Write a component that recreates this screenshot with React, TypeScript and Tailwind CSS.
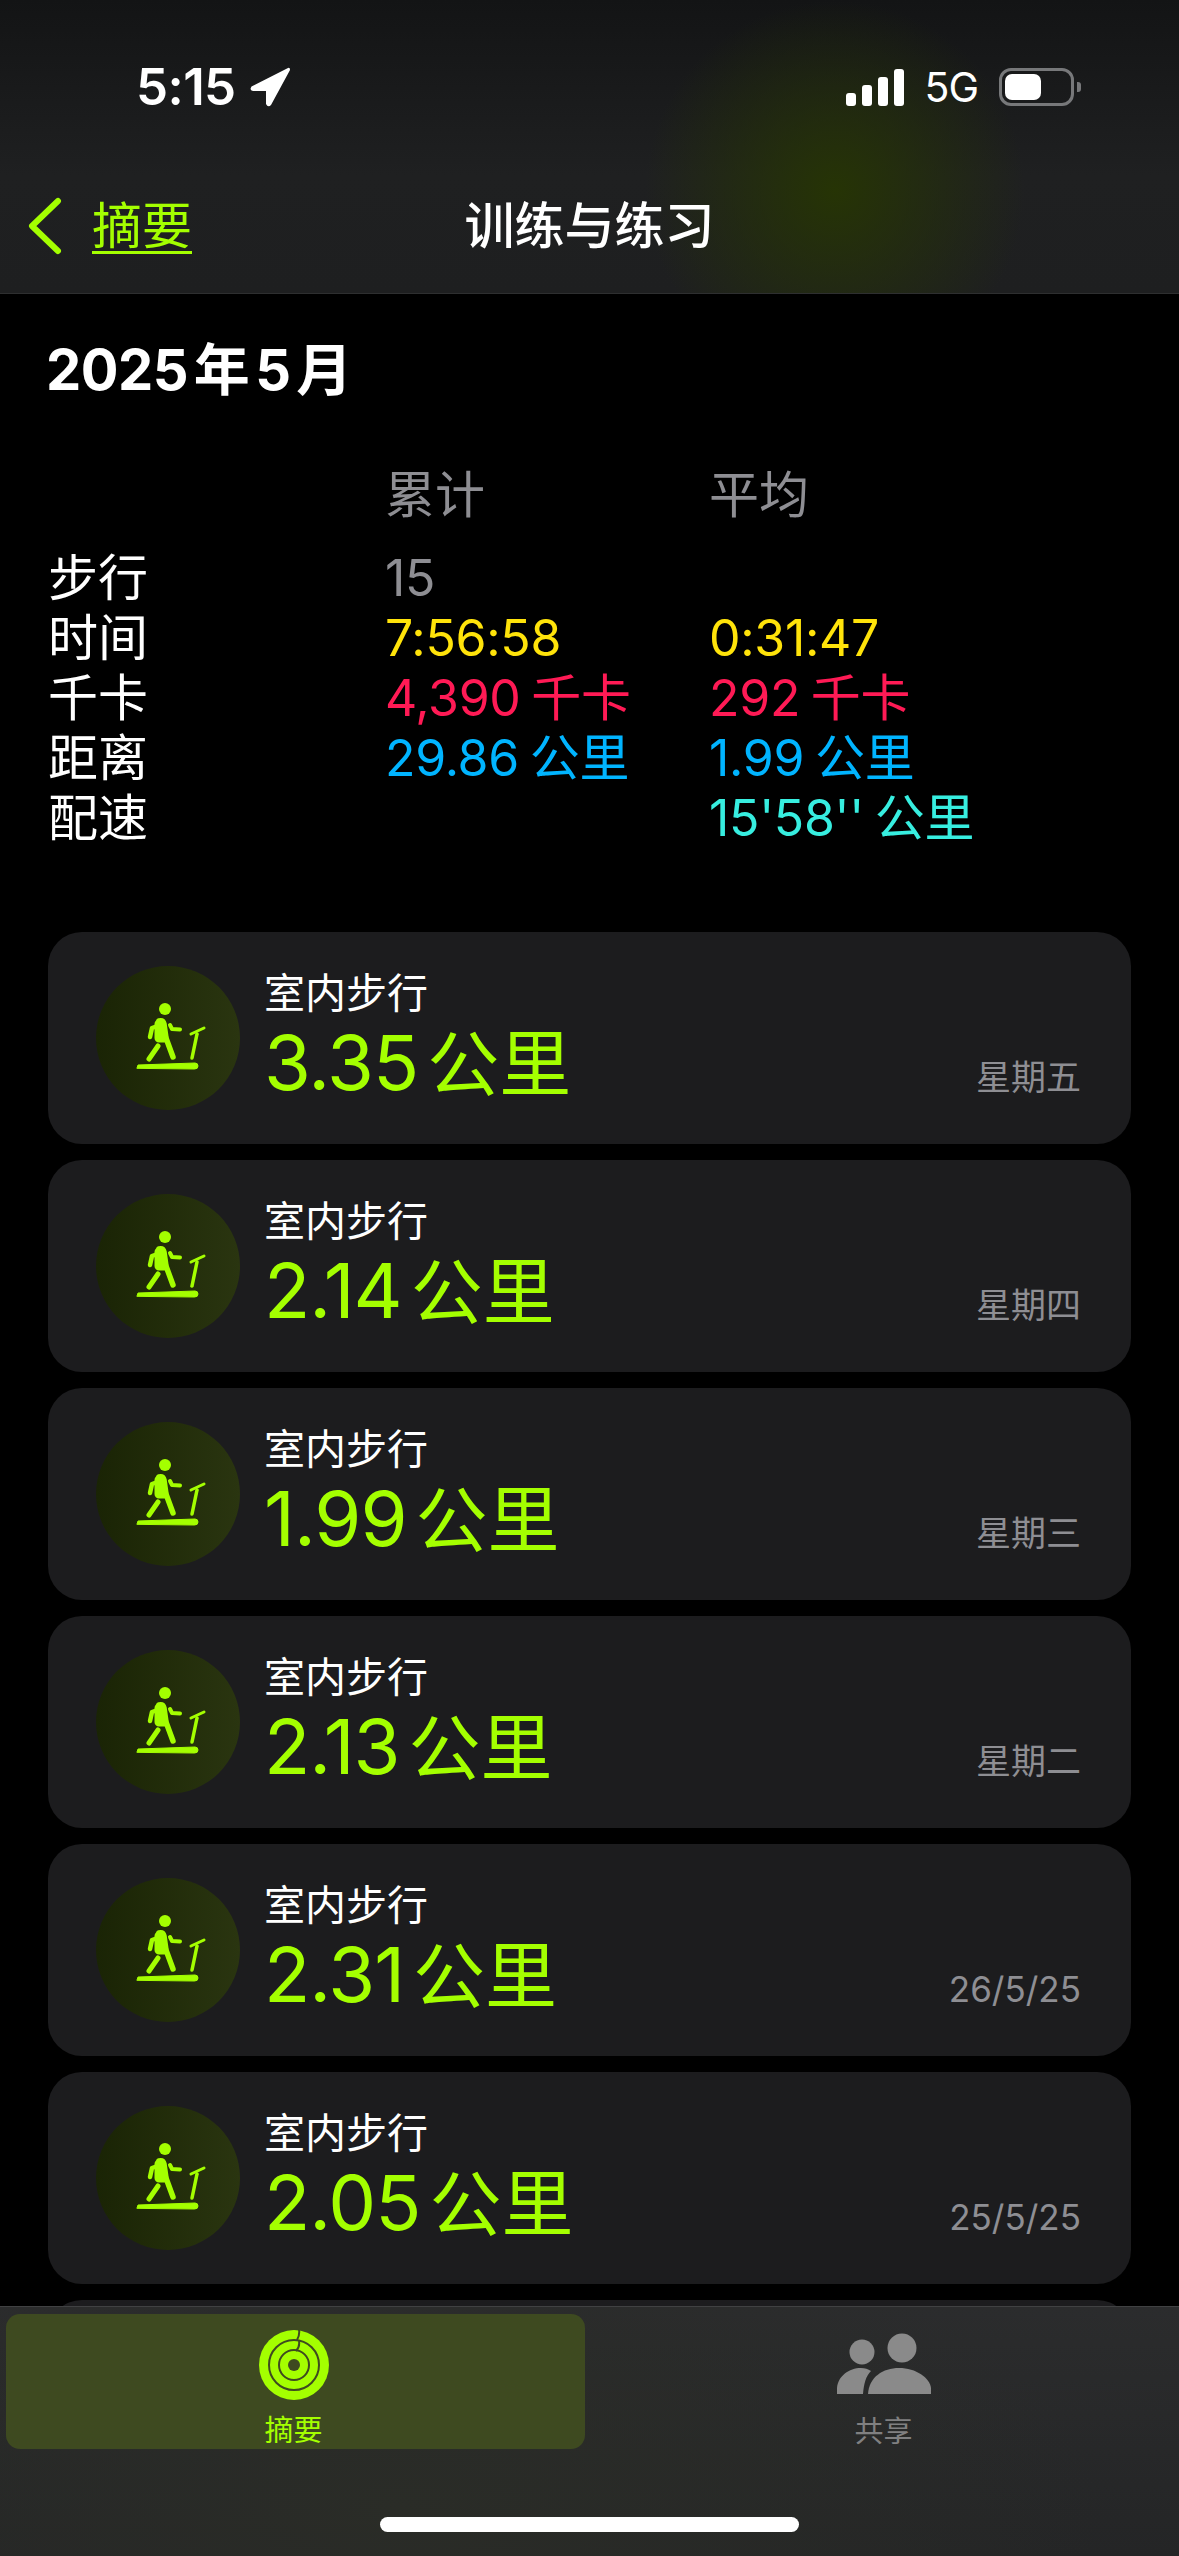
const stack = "font-['Inter','Noto_Sans_CJK_SC',sans-serif]";

type Workout = { km: string; day: string };

const workouts: Workout[] = [
  { km: "3.35", day: "星期五" },
  { km: "2.14", day: "星期四" },
  { km: "1.99", day: "星期三" },
  { km: "2.13", day: "星期二" },
  { km: "2.31", day: "26/5/25" },
  { km: "2.05", day: "25/5/25" },
];

const rows = [
  { label: "步行", total: "15", avg: "", totalColor: "text-[#8e8e93]", avgColor: "" },
  { label: "时间", total: "7:56:58", avg: "0:31:47", totalColor: "text-[#ffe30a]", avgColor: "text-[#ffe30a]" },
  { label: "千卡", total: "4,390 千卡", avg: "292 千卡", totalColor: "text-[#ff1a55]", avgColor: "text-[#ff1a55]" },
  { label: "距离", total: "29.86 公里", avg: "1.99 公里", totalColor: "text-[#00b4ff]", avgColor: "text-[#00b4ff]" },
  { label: "配速", total: "", avg: "15'58'' 公里", totalColor: "", avgColor: "text-[#37eee0]" },
];

const StatusBar = () => (
  <div className="flex h-[110px] items-center justify-between pl-[136px] pr-[98px] pt-[64px]">
    <div className="flex items-center gap-[14px]">
      <span className="text-[51px] leading-[60px] font-semibold tracking-[-0.6px] text-white">5:15</span>
      <svg width="40" height="42" viewBox="0 0 40 40" fill="#fff">
        <path d="M38 1 L1.5 19.5 Q-1 23.5 3 24 L16 24 L16 37 Q18 41 21 38 L40 3 Q40 0 38 1 Z" />
      </svg>
    </div>
    <div className="flex items-center">
      <div className="flex h-[38px] items-end gap-[6px]">
        <div className="h-[13px] w-[10px] rounded-[3px] bg-white" />
        <div className="h-[21px] w-[10px] rounded-[3px] bg-white" />
        <div className="h-[29px] w-[10px] rounded-[3px] bg-white" />
        <div className="h-[37px] w-[10px] rounded-[3px] bg-white" />
      </div>
      <span className="ml-[20px] text-[41px] leading-[40px] tracking-[-1px] text-white">5G</span>
      <div className="ml-[21px] flex h-[38px] w-[75px] items-center rounded-[12px] border-[3px] border-[#77787a] pl-[3px]">
        <div className="h-[26px] w-[36px] rounded-[7px] bg-white" />
      </div>
      <div className="ml-[3px] h-[10px] w-[4px] rounded-r-[3px] bg-[#77787a]" />
    </div>
  </div>
);

const NavBar = () => (
  <div className="grid h-[100px] grid-cols-[1fr_auto_1fr] items-center px-[28px]">
    <div className="flex items-center">
      <svg width="34" height="58" viewBox="0 0 34 58" fill="none" stroke="#a4ff00" strokeWidth="6" strokeLinecap="round" strokeLinejoin="round">
        <path d="M30 4 L4 29 L30 54" />
      </svg>
      <span className="ml-[30px] text-[50px] leading-[60px] text-[#a4ff00] underline decoration-[3px] underline-offset-[7px]">摘要</span>
    </div>
    <span className="text-[50px] leading-[60px] font-medium text-white">训练与练习</span>
    <div />
  </div>
);

const SummaryTable = () => (
  <div className="grid grid-cols-[337px_324px_1fr] pl-[48px] text-[50px] leading-[60px] [word-spacing:-3px]">
    <div />
    <div className="mb-[23px] text-[#8e8e93]">累计</div>
    <div className="mb-[23px] text-[#8e8e93]">平均</div>
    {rows.map((row) => (
      <div key={row.label} className="contents">
        <div className="text-white">{row.label}</div>
        <div className={`tracking-[-0.3px] ${row.totalColor}`}>{row.total}</div>
        <div className={`tracking-[-0.3px] ${row.avgColor}`}>{row.avg}</div>
      </div>
    ))}
  </div>
);

const TreadmillIcon = () => (
  <svg width="144" height="144" viewBox="0 0 144 144" fill="none" stroke="#a4ff00" strokeLinecap="round" strokeLinejoin="round">
    <circle cx="69" cy="43" r="6" fill="#a4ff00" stroke="none" />
    <path d="M63 55 Q67 54 68 58 L70 72 L77 91" strokeWidth="5.5" />
    <path d="M67 58 L56 62 L54 71" strokeWidth="4.5" />
    <path d="M63 58 L63 72 L68 72" strokeWidth="9" />
    <path d="M62 80 L53 93" strokeWidth="5" />
    <path d="M74 59 L76 63 L84 63.5" strokeWidth="4" />
    <path d="M95 68 L108 62" strokeWidth="3" />
    <path d="M101 68 L96 92" strokeWidth="3.5" />
    <path d="M41 102 L42 99 L99 97 Q102 97 102 100 Q102 103 99 103 Z" fill="#a4ff00" strokeWidth="1" />
  </svg>
);

const WorkoutCard = ({ km, day }: Workout) => (
  <div className="flex h-[212px] shrink-0 rounded-[34px] bg-[#1c1c1e] pl-[48px] pr-[50px]">
    <div className="mt-[34px] size-[144px] shrink-0 rounded-full bg-gradient-to-r from-[#1a2405] to-[#2a3510]">
      <TreadmillIcon />
    </div>
    <div className="ml-[24px] flex flex-col pt-[36px]">
      <span className="text-[41px] leading-[50px] text-white">室内步行</span>
      <div className="flex items-baseline leading-[88px] text-[#a4ff00]">
        <span className="text-[76px] tracking-[-1px]">{km}</span>
        <span className="ml-[9px] text-[72px]">公里</span>
      </div>
    </div>
    <div className="ml-auto self-end pb-[46px] text-[35px] leading-[42px] text-[#8e8e93]">{day}</div>
  </div>
);

const RingsIcon = () => (
  <svg width="72" height="72" viewBox="0 0 72 72" fill="none">
    <circle cx="36" cy="36" r="35" fill="#a4ff00" />
    <circle cx="36" cy="36" r="25" stroke="#3e4a20" strokeWidth="2" />
    <circle cx="36" cy="36" r="15" stroke="#3e4a20" strokeWidth="2" />
    <circle cx="36" cy="36" r="6" fill="#3e4a20" />
    <path d="M41 0 Q42 6 39 11 M41 12 Q42 18 38 22" stroke="#3e4a20" strokeWidth="2" />
  </svg>
);

const ShareIcon = () => (
  <svg width="94" height="62" viewBox="0 0 94 62" fill="#8a8a8a">
    <circle cx="25" cy="19" r="12.5" />
    <circle cx="65" cy="15" r="14.5" />
    <path d="M0 61 L0 55 C1 43 12 35 24 35 C28 35 31 36 34 38 C29 43 27 50 26 61 Z" />
    <path d="M31 61 C32 44 46 35 62 35 C79 35 93 45 94 55 L94 61 Z" />
  </svg>
);

const TabBar = () => (
  <div className="relative z-10 flex h-[250px] shrink-0 flex-col border-t-[1.5px] border-[#404142] bg-[radial-gradient(ellipse_700px_300px_at_400px_200px,#2a2c27,transparent),linear-gradient(#2b2c2d,#242526)] pl-[6px] pt-[7px]">
    <div className="grid grid-cols-[579px_1fr]">
      <div className="flex h-[135px] flex-col items-center rounded-[14px] bg-[#3e4a20] pr-[4px] pt-[15px]">
        <RingsIcon />
        <span className="mt-[13px] text-[29px] leading-[34px] text-[#a4ff00]">摘要</span>
      </div>
      <div className="flex h-[135px] flex-col items-center pl-[3px] pt-[19px]">
        <ShareIcon />
        <span className="mt-[20px] text-[29px] leading-[34px] text-[#808081]">共享</span>
      </div>
    </div>
    <div className="mx-auto mt-[68px] h-[15px] w-[419px] -translate-x-[3px] rounded-full bg-white" />
  </div>
);

export default function App() {
  return (
    <div className={`flex h-[2556px] w-[1179px] flex-col overflow-hidden bg-black ${stack}`}>
      <header className="h-[294px] shrink-0 border-b-[1.5px] border-[#2e2f30] bg-[radial-gradient(ellipse_190px_190px_at_835px_190px,#263405,transparent),linear-gradient(#131415,#1f2021_60%,#1e1f20)]">
        <StatusBar />
        <div className="h-[66px]" />
        <NavBar />
      </header>
      <main className="min-h-0 flex-1 overflow-hidden">
        <h1 className="mt-[40px] pl-[46px] text-[56px] leading-[72px] font-bold tracking-[-0.5px] text-white [word-spacing:-7px]">
          2025 年 5 月
        </h1>
        <div className="mt-[59px]">
          <SummaryTable />
        </div>
        <div className="mt-[84px] flex flex-col gap-[16px] px-[48px]">
          {workouts.map((w) => (
            <WorkoutCard key={w.day} km={w.km} day={w.day} />
          ))}
          {/* next row just peeks out above the tab bar */}
          <div className="h-[212px] shrink-0 rounded-[34px] bg-[#1c1c1e]" />
        </div>
      </main>
      <TabBar />
    </div>
  );
}
